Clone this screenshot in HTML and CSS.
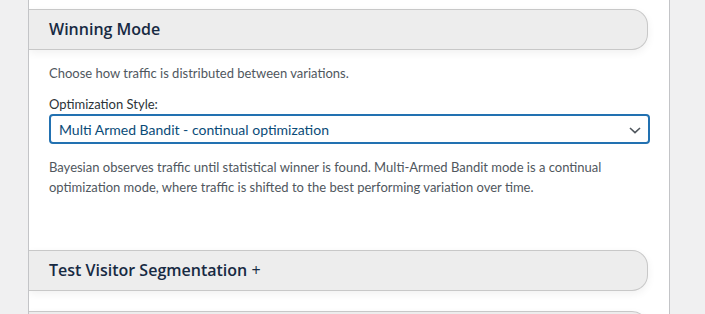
FILE: index.html
```html
<!DOCTYPE html>
<html lang="en">
<head>
<meta charset="utf-8">
<title>Winning Mode</title>
<link rel="stylesheet" href="styles.css">
</head>
<body>
<div class="panel">
  <section class="section">
    <h2 class="section-header">Winning Mode</h2>
    <div class="section-body">
      <p class="desc">Choose how traffic is distributed between variations.</p>
      <label class="field-label">Optimization Style:</label>
      <div class="select">
        <span class="select-value">Multi Armed Bandit - continual optimization</span>
        <svg class="chevron" width="12" height="7" viewBox="0 0 12 7" aria-hidden="true"><polyline points="1,1 6,5.6 11,1" fill="none" stroke="#50575e" stroke-width="1.6"/></svg>
      </div>
      <p class="desc note">Bayesian observes traffic until statistical winner is found. Multi-Armed Bandit mode is a continual optimization mode, where traffic is shifted to the best performing variation over time.</p>
    </div>
  </section>
  <section class="section">
    <h2 class="section-header">Test Visitor Segmentation <span class="plus">+</span></h2>
  </section>
  <section class="section">
    <div class="section-header"></div>
  </section>
</div>
</body>
</html>
```
FILE: styles.css
```css
html, body {
  margin: 0;
  padding: 0;
}
body {
  background: #f0f0f1;
  font-family: Lato, "Liberation Sans", sans-serif;
  font-size: 13px;
  color: #50575e;
  overflow: hidden;
  height: 314px;
}
.panel {
  margin-left: 28px;
  width: 640px;
  height: 305px;
  overflow: hidden;
  background: #fff;
  border-left: 1px solid #c3c4c7;
  border-right: 1px solid #c3c4c7;
  padding-top: 9px;
}
.section-header {
  margin: 0 21px 0 0;
  height: 41px;
  box-sizing: border-box;
  background: #ededed;
  border: 1px solid #c8c8c8;
  border-left: none;
  border-radius: 0 16px 16px 0;
  box-shadow: 0 3px 8px rgba(0, 0, 0, 0.06);
  padding-left: 20px;
  font-family: "Open Sans", sans-serif;
  font-weight: 600;
  font-size: 16px;
  line-height: 39px;
  color: #172a43;
}
.plus {
  font-weight: 400;
}
.section-body {
  padding: 13px 19px 53px 20px;
}
.desc {
  margin: 0;
  line-height: 20px;
}
.field-label {
  display: block;
  margin-top: 11px;
  line-height: 20px;
  color: #2c3338;
}
.select {
  display: flex;
  align-items: center;
  justify-content: space-between;
  height: 30px;
  box-sizing: border-box;
  border: 2px solid #2271b1;
  border-radius: 4px;
  padding: 1px 7px 0 8px;
  font-size: 14px;
  color: #0a4b78;
}
.chevron {
  margin-top: 1px;
}
.note {
  margin-top: 13px;
}
.section:nth-child(2) .section-header {
  margin-bottom: 20px;
}
```
